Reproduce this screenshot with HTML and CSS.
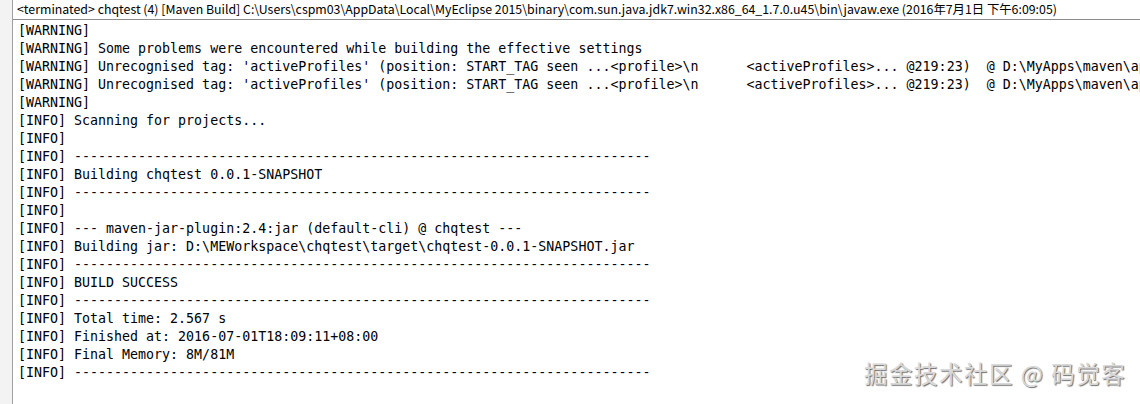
FILE: index.html
```html
<!DOCTYPE html>
<html>
<head>
<meta charset="utf-8">
<link rel="stylesheet" href="styles.css">
</head>
<body>
<div class="window">
  <div class="gutter"></div>
  <div class="console">
    <div class="title">&lt;terminated&gt; chqtest (4) [Maven Build] C:\Users\cspm03\AppData\Local\MyEclipse 2015\binary\com.sun.java.jdk7.win32.x86_64_1.7.0.u45\bin\javaw.exe (2016年7月1日 下午6:09:05)</div>
    <pre class="output">[WARNING]
[WARNING] Some problems were encountered while building the effective settings
[WARNING] Unrecognised tag: 'activeProfiles' (position: START_TAG seen ...&lt;profile&gt;\n      &lt;activeProfiles&gt;... @219:23)  @ D:\MyApps\maven\apache-maven-3.3.9\conf\settings.xml, line 219, column 23
[WARNING] Unrecognised tag: 'activeProfiles' (position: START_TAG seen ...&lt;profile&gt;\n      &lt;activeProfiles&gt;... @219:23)  @ D:\MyApps\maven\apache-maven-3.3.9\conf\settings.xml, line 219, column 23
[WARNING]
[INFO] Scanning for projects...
[INFO]
[INFO] ------------------------------------------------------------------------
[INFO] Building chqtest 0.0.1-SNAPSHOT
[INFO] ------------------------------------------------------------------------
[INFO]
[INFO] --- maven-jar-plugin:2.4:jar (default-cli) @ chqtest ---
[INFO] Building jar: D:\MEWorkspace\chqtest\target\chqtest-0.0.1-SNAPSHOT.jar
[INFO] ------------------------------------------------------------------------
[INFO] BUILD SUCCESS
[INFO] ------------------------------------------------------------------------
[INFO] Total time: 2.567 s
[INFO] Finished at: 2016-07-01T18:09:11+08:00
[INFO] Final Memory: 8M/81M
[INFO] ------------------------------------------------------------------------</pre>
  </div>
  <div class="watermark">掘金技术社区 @ 码觉客</div>
</div>
</body>
</html>
```
FILE: styles.css
```css
html, body {
  margin: 0;
  padding: 0;
  background: #ffffff;
}
.window {
  position: relative;
  display: flex;
  width: 1140px;
  height: 404px;
  overflow: hidden;
}
.gutter {
  width: 12px;
  flex: none;
  background: #f3f3f3;
  border-right: 1px solid #a0a0a0;
}
.console {
  flex: 1;
  min-width: 0;
  overflow: hidden;
}
.title {
  height: 19px;
  line-height: 19px;
  padding-left: 4px;
  border-bottom: 1px solid #8c8c8c;
  font-family: "Noto Sans CJK SC", "Noto Sans", sans-serif;
  font-size: 12.35px;
  color: #000;
  white-space: nowrap;
  overflow: hidden;
}
.output {
  margin: 0;
  padding: 2px 0 0 5px;
  font-family: "DejaVu Sans Mono", "Liberation Mono", monospace;
  font-size: 13.3px;
  line-height: 18px;
  color: #000;
  white-space: pre;
}
.watermark {
  position: absolute;
  left: 864px;
  top: 356px;
  font-family: "Noto Sans CJK SC", sans-serif;
  font-size: 23.5px;
  color: #d8d8d8;
  text-shadow: 1px 1px 1px #6e6e6e;
  letter-spacing: 1.5px;
  white-space: nowrap;
}
```
